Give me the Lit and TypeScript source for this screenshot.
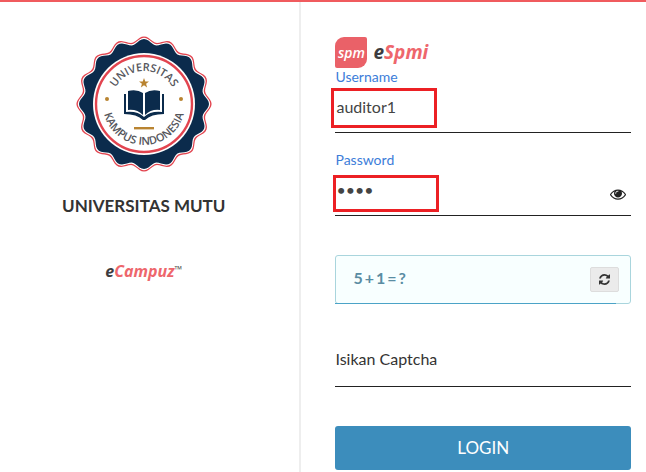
import { LitElement, html, css, svg } from "lit";
import { customElement, state } from "lit/decorators.js";

const CENTER = 68;

// Closed wavy outline around the seal's centre.
function scallop(radius: number, depth: number, bumps = 16): string {
  const points: string[] = [];
  for (let deg = 0; deg < 360; deg += 2) {
    const a = (deg * Math.PI) / 180;
    const r = radius + depth * Math.cos(a * bumps);
    points.push(`${(CENTER + r * Math.sin(a)).toFixed(2)} ${(CENTER - r * Math.cos(a)).toFixed(2)}`);
  }
  return `M${points.join("L")}Z`;
}

@customElement("campus-seal")
class CampusSeal extends LitElement {
  static styles = css`
    :host { display: block; }
    svg { display: block; width: 136px; height: 136px; }
    .word { font: 600 11px "Open Sans", "Noto Sans", sans-serif; fill: #55565c; text-anchor: middle; }
  `;
  render() {
    return html`
      <svg viewBox="0 0 136 136" role="img" aria-label="Universitas Kampus Indonesia">
        <defs>
          <path id="upper" d="M35 68a33 33 0 0 1 66 0" />
          <path id="lower" d="M27 68a41 41 0 0 0 82 0" />
        </defs>
        <path d=${scallop(65, 2.6)} fill="#e2444f" />
        <path d=${scallop(63.6, 2.6)} fill="#fff" />
        <path d=${scallop(62.4, 2.6)} fill="#0b2b4c" />
        <circle cx="68" cy="68" r="51" fill="#fff" />
        <circle cx="68" cy="68" r="48" fill="none" stroke="#e2444f" stroke-width="2.4" />
        <text class="word"><textPath href="#upper" startOffset="50%">UNIVERSITAS</textPath></text>
        <text class="word"><textPath href="#lower" startOffset="50%">KAMPUS INDONESIA</textPath></text>
        <path d="M68 42l1.300 3.500h3.700l-2.900 2.300 1 3.600-3.100-2.100-3.100 2.100 1-3.600-2.900-2.300h3.700z" fill="#b98431" />
        <circle cx="31" cy="63" r="2" fill="#b98431" />
        <circle cx="105" cy="63" r="2" fill="#b98431" />
        <path d="M52 55q9-2 15 2v22q-6-6-15-5zM84 55q-9-2-15 2v22q6-6 15-5z" fill="#0b2b4c" />
        <path d="M50 58l-2 0v20q13 0 19 6h2q6-6 19-6v-20h-2v18q-12-1-18 5-6-6-18-5z" fill="#0b2b4c" />
        <rect x="58" y="91" width="20" height="2.400" fill="#b98431" />
      </svg>
    `;
  }
}

const eyeIcon = svg`<path d="M1664 960q-152-236-381-353 61 104 61 225 0 185-131.500 316.500t-316.500 131.500-316.500-131.500-131.500-316.500q0-121 61-225-229 117-381 353 133 205 333.500 326.500t434.500 121.500 434.500-121.500 333.500-326.500zm-720-384q0-20-14-34t-34-14q-125 0-214.500 89.500t-89.500 214.500q0 20 14 34t34 14 34-14 14-34q0-86 61-147t147-61q20 0 34-14t14-34zm848 384q0 34-20 69-140 230-376.500 368.500t-499.500 138.500-499.500-139-376.500-368q-20-35-20-69t20-69q140-229 376.500-368t499.500-139 499.500 139 376.500 368q20 35 20 69z"/>`;
const refreshIcon = svg`<path d="M1511 928q0 5-1 7-64 268-268 434.500t-478 166.500q-146 0-282.500-55t-243.500-157l-129 129q-19 19-45 19t-45-19-19-45v-448q0-26 19-45t45-19h448q26 0 45 19t19 45-19 45l-137 137q71 66 161 102t187 36q134 0 250-65t186-179q11-17 53-117 8-23 30-23h192q13 0 22.500 9.500t9.500 22.500zm25-800v448q0 26-19 45t-45 19h-448q-26 0-45-19t-19-45 19-45l138-138q-148-137-349-137-134 0-250 65t-186 179q-11 17-53 117-8 23-30 23h-199q-13 0-22.500-9.500t-9.500-22.500v-7q65-268 270-434.500t480-166.500q146 0 284 55.500t245 156.500l130-129q19-19 45-19t45 19 19 45z"/>`;

@customElement("app-root")
class AppRoot extends LitElement {
  @state() private revealed = false;
  @state() private terms = [5, 1];

  static styles = css`
    :host {
      display: block;
      font-family: Lato, "Liberation Sans", sans-serif;
      color: #333;
      background: #fff;
    }
    * { box-sizing: border-box; }
    .page {
      display: grid;
      grid-template-columns: 7fr 8fr;
      min-height: 100vh;
      border-top: 2px solid #f05b5e;
    }
    .brand {
      display: flex;
      flex-direction: column;
      align-items: center;
      padding: 34px 12px 0 0;
      border-right: 2px solid #eee;
    }
    .campus { margin: 22px 0 0; font-size: 17px; line-height: 24px; font-weight: 700; }
    .vendor {
      display: flex;
      margin: 41px 0 0;
      font: italic 700 16px/24px "Open Sans", "Noto Sans", sans-serif;
      color: #ee666c;
    }
    .dark { color: #3c3c40; }
    .tm { font: 400 10px/20px "Open Sans", sans-serif; color: #555; }
    .login { display: flex; flex-direction: column; padding: 34px 15px 0 34px; }
    .product { display: flex; align-items: center; gap: 6px; height: 32px; }
    .badge {
      width: 32px;
      height: 31px;
      border-radius: 9px 2px 9px 2px;
      background: #ea6168;
      color: #fff;
      font: italic 600 14px/32px "Open Sans", "Noto Sans", sans-serif;
      text-align: center;
    }
    .name { font: italic 700 19px/24px "Noto Sans", "Open Sans", sans-serif; color: #ee666c; }
    .field { position: relative; display: flex; flex-direction: column; }
    .field + .field { margin-top: 18px; }
    .label { font-size: 14px; line-height: 18px; color: #3c7dd9; }
    .input {
      width: 100%;
      height: 47px;
      padding: 0 36px 6px 1px;
      border: 0;
      border-bottom: 1px solid #222;
      border-radius: 0;
      outline: 0;
      background: transparent;
      font: 400 16px/24px Lato, "Liberation Sans", sans-serif;
      color: #444;
    }
    .answer { padding: 0 0 9px; margin-top: 36px; }
    .answer::placeholder { color: #333; opacity: 1; }
    .mark {
      position: absolute;
      left: -4px;
      bottom: 5px;
      width: 106px;
      height: 40px;
      border: 3px solid #ec2024;
      pointer-events: none;
    }
    .mark.secret { left: -2px; bottom: 4px; height: 37px; }
    .eye {
      position: absolute;
      right: 5px;
      bottom: 13px;
      padding: 0;
      border: 0;
      background: none;
      line-height: 0;
      cursor: pointer;
    }
    .eye svg { width: 16px; height: 18px; fill: #222; }
    .captcha {
      position: relative;
      display: flex;
      align-items: center;
      justify-content: space-between;
      height: 49px;
      margin-top: 39px;
      padding: 0 11px 0 17px;
      border: 1px solid #a9d5dd;
      border-radius: 3px;
      background: #f8ffff;
    }
    .captcha::after {
      content: "";
      position: absolute;
      left: -1px;
      right: 14px;
      bottom: -1px;
      height: 1px;
      background: #4ba3c7;
    }
    .sum { display: flex; gap: 2px; padding-bottom: 3px; font-size: 16px; line-height: 24px; font-weight: 700; color: #5a8da3; }
    .refresh {
      display: grid;
      place-items: center;
      width: 29px;
      height: 25px;
      padding: 0;
      border: 1px solid #ddd;
      border-radius: 2px;
      background: #ebebeb;
      cursor: pointer;
    }
    .refresh svg { width: 11px; height: 11px; fill: #333; }
    .submit {
      height: 44px;
      margin-top: 39px;
      border: 0;
      border-radius: 3px;
      background: #3c8dbc;
      color: #fff;
      font: 400 17px/24px Lato, "Liberation Sans", sans-serif;
      cursor: pointer;
    }
  `;

  private toggle() {
    this.revealed = !this.revealed;
  }

  private renew() {
    this.terms = this.terms.map(() => 1 + Math.floor(Math.random() * 9));
  }

  render() {
    const sum = [this.terms[0], "+", this.terms[1], "=", "?"];
    return html`
      <main class="page">
        <section class="brand">
          <campus-seal></campus-seal>
          <h1 class="campus">UNIVERSITAS MUTU</h1>
          <p class="vendor"><span class="dark">e</span><span>Campuz</span><span class="tm">™</span></p>
        </section>
        <form class="login" @submit=${(e: Event) => e.preventDefault()}>
          <div class="product">
            <span class="badge">spm</span>
            <span class="name"><span class="dark">e</span>Spmi</span>
          </div>
          <div class="field">
            <label class="label" for="user">Username</label>
            <input class="input" id="user" type="text" value="auditor1" />
            <span class="mark"></span>
          </div>
          <div class="field">
            <label class="label" for="pass">Password</label>
            <input class="input" id="pass" type=${this.revealed ? "text" : "password"} value="demo" />
            <span class="mark secret"></span>
            <button class="eye" type="button" aria-label="Show password" @click=${this.toggle}>
              <svg viewBox="0 0 1792 1792">${eyeIcon}</svg>
            </button>
          </div>
          <div class="captcha">
            <span class="sum">${sum.map((part) => html`<span>${part}</span> `)}</span>
            <button class="refresh" type="button" aria-label="New captcha" @click=${this.renew}>
              <svg viewBox="0 0 1536 1536">${refreshIcon}</svg>
            </button>
          </div>
          <input class="input answer" type="text" aria-label="Isikan Captcha" placeholder="Isikan Captcha" />
          <button class="submit" type="submit">LOGIN</button>
        </form>
      </main>
    `;
  }
}
